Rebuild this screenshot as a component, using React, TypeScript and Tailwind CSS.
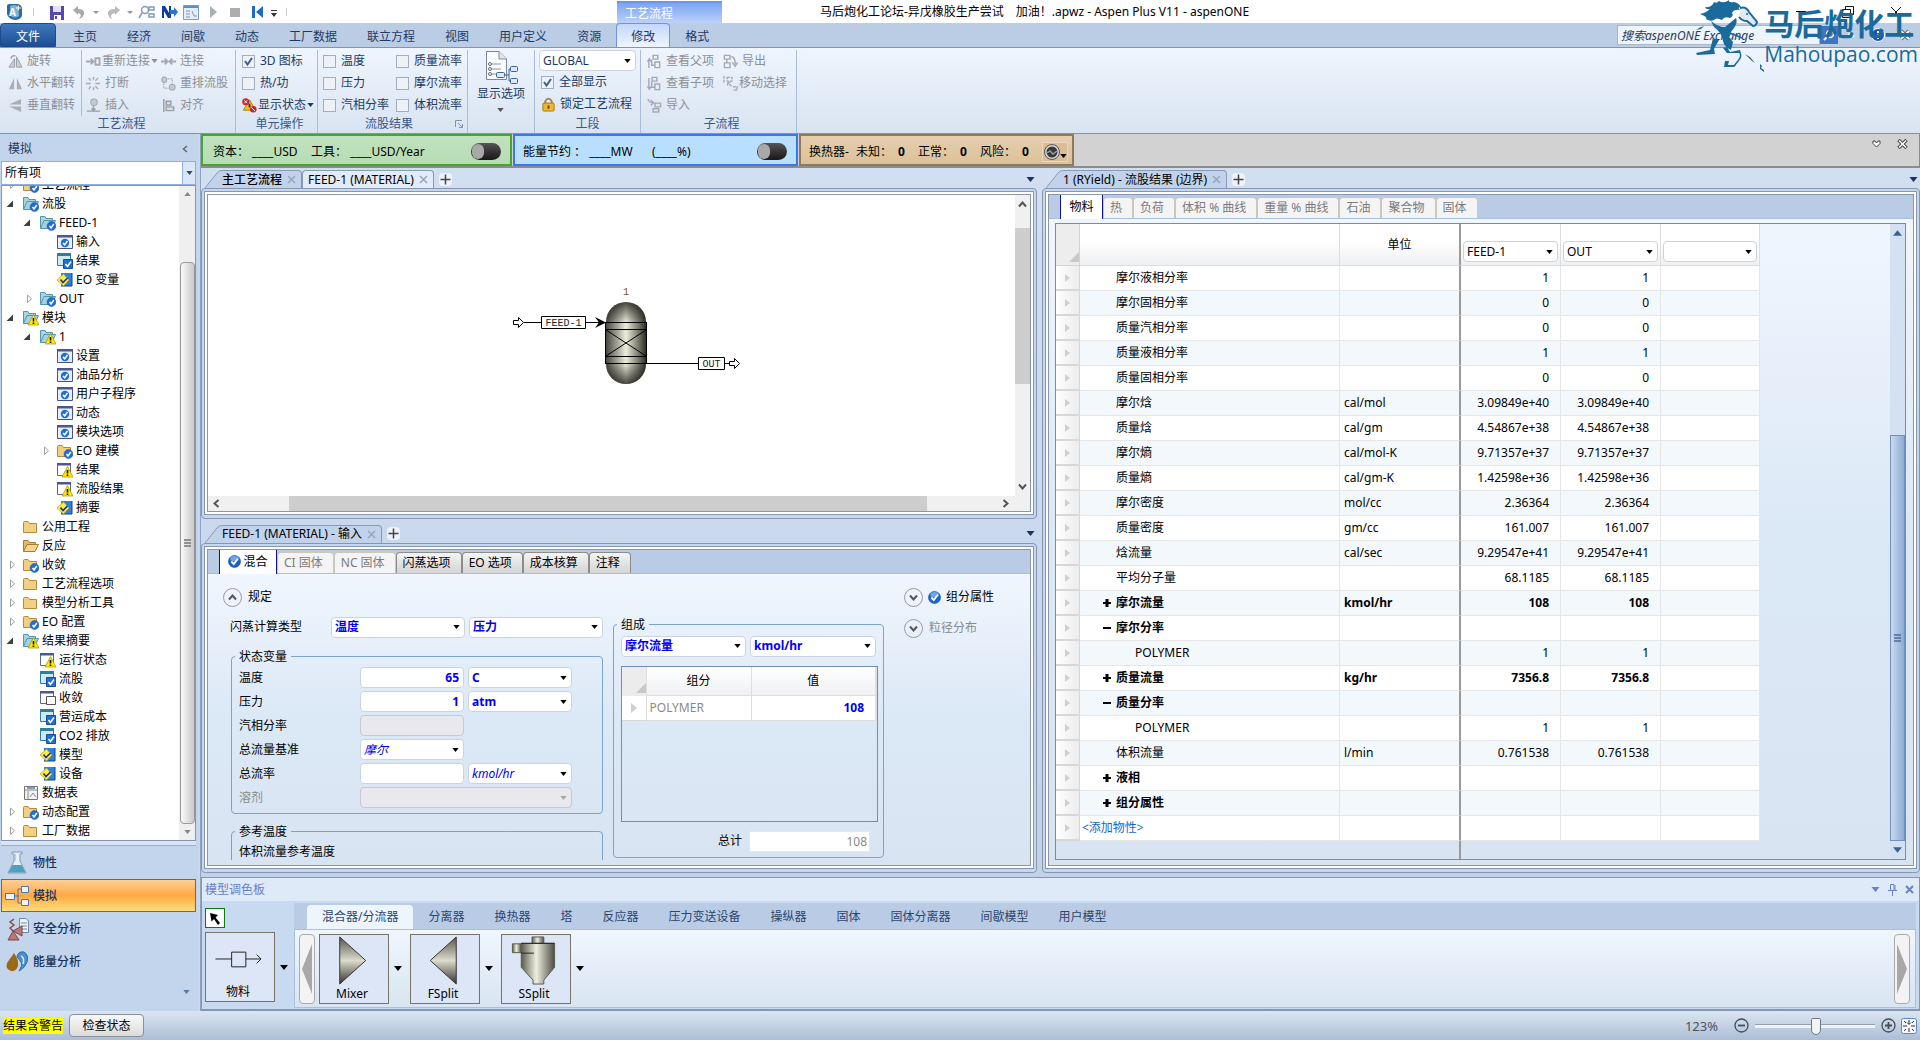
import type { ReactNode } from "react";

const SHELL_FONT =
    "font-['Noto_Sans','Noto_Sans_CJK_SC',sans-serif] text-xs leading-4";

/* ---------- small shared pieces ---------- */

function Caret({ className = "" }: { className?: string }) {
    return (
        <svg viewBox="0 0 8 5" className={`h-[4px] w-[7px] shrink-0 ${className}`} aria-hidden="true">
            <path d="M0 0H8L4 5Z" fill="currentColor" />
        </svg>
    );
}

interface ComboProps {
    label: string;
    value?: string;
    className?: string;
    disabled?: boolean;
}

function Combo({ label, value = "", className = "", disabled = false }: ComboProps) {
    return (
        <span
            className={`relative flex h-[21px] items-center rounded-sm border ${
                disabled ? "border-[#c9c9cd] bg-[#e8e8ee]" : "border-[#ccd3de] bg-white"
            } ${className}`}
        >
            <select
                aria-label={label}
                disabled={disabled}
                defaultValue={value}
                className="h-full w-full appearance-none bg-transparent pr-4 pl-[3px] outline-none"
            >
                <option value={value}>{value}</option>
            </select>
            <Caret
                className={`pointer-events-none absolute right-1 ${disabled ? "text-[#a8a8a8]" : "text-black"}`}
            />
        </span>
    );
}

function Tick({ label, checked = false }: { label: string; checked?: boolean }) {
    return (
        <label className="flex h-[22px] items-center gap-[5px] whitespace-nowrap">
            <span className="relative flex size-[13px] shrink-0">
                <input
                    type="checkbox"
                    defaultChecked={checked}
                    className="peer size-[13px] appearance-none border border-[#a3adbd] bg-[#eef1f5]"
                />
                <svg
                    viewBox="0 0 13 13"
                    className="pointer-events-none absolute inset-0 hidden peer-checked:block"
                    aria-hidden="true"
                >
                    <path d="M3 6L5.500 9.500L10 3" fill="none" stroke="#3c5f96" strokeWidth="2" />
                </svg>
            </span>
            {label}
        </label>
    );
}

function CheckBall() {
    return (
        <svg viewBox="0 0 14 14" className="size-[13px] shrink-0" aria-hidden="true">
            <circle cx="7" cy="7" r="6.500" fill="#1b62c4" stroke="#0d4aa0" strokeWidth="0.600" />
            <ellipse cx="7" cy="4" rx="4.600" ry="2.800" fill="#6ba5ea" />
            <path d="M3.600 7L6.200 9.800L10.600 4" fill="none" stroke="#fff" strokeWidth="2" />
        </svg>
    );
}

/* ---------- title bar ---------- */

function QuickAccess() {
    return (
        <div className="flex w-[617px] items-center text-[#a8a8a8]">
            <svg width="290" height="20" viewBox="0 0 290 20" aria-hidden="true">
                <path d="M7 4Q7 2 9 2H18Q22 3 22 7V14Q20 18 15 18Q8 17 7 12Z" fill="#2d6c9e" />
                <path d="M10 4Q14 2 18 4L19 14Q15 17 11 14Z" fill="#7fb2d3" />
                <text x="9" y="14" fontSize="10" fontWeight="700" fill="#fff">A</text>
                <path d="M16 6H21M18.500 3.500V8.500" stroke="#fff" />
                <path d="M33.500 6V14M286.500 6V14" stroke="#c5cbd6" />
                <path d="M50 4H64V18H50Z" fill="#5a48a8" />
                <path d="M53 4H61V10H53Z" fill="#e3e1f3" />
                <path d="M54 13H61V18H54Z" fill="#fff" />
                <path d="M55 14H57V17H55Z" fill="#5a48a8" />
                <path d="M73 8L78 4V7Q85 7 84 12Q83 16 79 17Q83 12 78 11V13Z" fill="#aaa" />
                <path d="M93 9H99L96 12ZM127 9H133L130 12Z" fill="#999" />
                <path d="M120 8L115 4V7Q107 7 108 12Q109 16 112 17Q109 12 115 11V13Z" fill="#bbb" />
                <g fill="none" stroke="#7f9cb8" strokeWidth="1.500">
                    <circle cx="145" cy="8" r="3.500" />
                    <path d="M142 11L139 16M148 8H151M149 5H154V8H149ZM149 12H154V15H149Z" />
                </g>
                <path d="M162 16V4H165L169 11V4H171V16H168L164 9V16Z" fill="#103c9c" />
                <path d="M170 8H174V5L178 10L174 15V12H170Z" fill="#2d74cf" />
                <path d="M183.500 3.500H198.500V17.500H183.500Z" fill="#e4edf8" stroke="#7a9cc8" />
                <path d="M184 4H198V6H184Z" fill="#5c8ad0" />
                <path d="M186 9H190M186 12H190M186 15H190M192 9L194 14H197" stroke="#7f95b5" fill="none" />
                <path d="M210 4L217 10L210 16Z" fill="#a9b0ba" />
                <path d="M230 6H240V15H230Z" fill="#adadad" />
                <path d="M252 4H255V16H252ZM263 4V16L256 10Z" fill="#1c6ad0" />
                <path d="M271 8H277V9H271ZM271 11H277L274 15Z" fill="#333" />
            </svg>
        </div>
    );
}

function TitleBar() {
    return (
        <header className="flex h-[23px] bg-white text-black">
            <QuickAccess />
            <div className="mt-px w-[105px] border-t-2 border-[#6a96ea] bg-gradient-to-b from-[#7ba4f2] to-[#bcd1fa] pl-2 leading-[22px] text-white">
                工艺流程
            </div>
            <h1 className="pl-[98px] leading-[23px] whitespace-pre">
                马后炮化工论坛-异戊橡胶生产尝试　加油！.apwz - Aspen Plus V11 - aspenONE
            </h1>
            <div className="ml-auto flex items-center gap-9 pr-[18px]">
                <button aria-label="最小化" className="h-px w-2.5 bg-black" />
                <button aria-label="还原">
                    <svg width="12" height="12" viewBox="0 0 12 12" aria-hidden="true">
                        <path d="M0.500 3.500H8.500V11.500H0.500ZM3.500 3V0.500H11.500V8.500H9" fill="none" stroke="#111" />
                    </svg>
                </button>
                <button aria-label="关闭">
                    <svg width="12" height="12" viewBox="0 0 12 12" aria-hidden="true">
                        <path d="M1 1L11 11M11 1L1 11" stroke="#111" />
                    </svg>
                </button>
            </div>
        </header>
    );
}

const ribbonTabs = ["主页", "经济", "间歇", "动态", "工厂数据", "联立方程", "视图", "用户定义", "资源"];

function RibbonTabs() {
    return (
        <nav className="flex h-[25px] items-end border-b border-[#6d97dd] bg-[#bbcde5] text-[#1e3a64]">
            <button className="h-6 w-14 rounded-t-sm border border-[#1d4b8d] bg-gradient-to-b from-[#3f78bd] to-[#1d4e95] pt-[3px] text-white">
                文件
            </button>
            <div className="flex pl-0.5">
                {ribbonTabs.map((tab) => (
                    <button key={tab} className="h-6 px-[15px] pt-[3px]">
                        {tab}
                    </button>
                ))}
            </div>
            <button className="h-6 w-[54px] rounded-t-sm border border-b-0 border-[#6d97dd] bg-gradient-to-b from-[#c3d6fb] to-[#f0f5fe] pt-[3px]">
                修改
            </button>
            <button className="h-6 px-[15px] pt-[3px]">格式</button>
            <div className="ml-auto flex h-6 items-center pr-[9px]">
                <input
                    aria-label="搜索aspenONE Exchange"
                    defaultValue="搜索aspenONE Exchange"
                    className="h-5 w-[203px] border border-[#adb6c4] bg-[#eef4fb] px-[3px] text-[#2a3c5c] italic outline-none"
                />
                <button aria-label="搜索" className="flex h-[18px] w-[18px] items-center justify-center bg-[#3f74c0]">
                    <svg width="12" height="12" viewBox="0 0 12 12" aria-hidden="true">
                        <path d="M5 7L1 11" stroke="#fff" strokeWidth="2" />
                        <circle cx="7" cy="5" r="3.500" fill="none" stroke="#fff" strokeWidth="1.500" />
                    </svg>
                </button>
                <svg width="9" height="6" viewBox="0 0 9 6" className="ml-2" aria-hidden="true">
                    <path d="M1 5L4.500 1L8 5" fill="none" stroke="#fff" strokeWidth="2" />
                </svg>
                <svg width="14" height="14" viewBox="0 0 14 14" className="ml-4" aria-hidden="true">
                    <circle cx="7" cy="7" r="6.500" fill="#1d50c0" stroke="#fff" />
                    <path d="M7 3V5M7 6V11" stroke="#fff" strokeWidth="2" />
                </svg>
                <svg width="12" height="12" viewBox="0 0 12 12" className="ml-[14px]" aria-hidden="true">
                    <path d="M2 2L10 10M10 2L2 10" stroke="#667" strokeWidth="4" />
                    <path d="M2 2L10 10M10 2L2 10" stroke="#fff" strokeWidth="2" />
                </svg>
            </div>
        </nav>
    );
}

/* ---------- ribbon ---------- */

const ribbonIcons: Record<string, ReactNode> = {
    rotate: (
        <>
            <path d="M1 14H7L7 5ZM9 14H15L9 3Z" fill="#c9ccd2" stroke="#9a9ea6" />
            <path d="M3 5Q4 1 8 2" fill="none" stroke="#9a9ea6" strokeWidth="1.500" />
        </>
    ),
    flipH: <path d="M1 14H6.500V2ZM9.500 14H15L9.500 2Z" fill="#a9adb4" />,
    flipV: <path d="M1 7L14 1V7ZM1 9H14V15Z" fill="#a9adb4" />,
    reconnect: (
        <path d="M0 8H7M5 5L8 8L5 11M10 4.500H14.500V11.500H10Z" fill="none" stroke="#a5a9b0" strokeWidth="2" />
    ),
    cut: (
        <path d="M0 8H5M10 8H15M5 5L3 2M8 4V1M10 5L13 2M5 11L3 14M8 12V15M10 11L13 14" fill="none" stroke="#a5a9b0" strokeWidth="1.500" />
    ),
    insert: (
        <>
            <rect x="5" y="1" width="7" height="7" rx="3" fill="#c6c9ce" stroke="#9a9ea6" />
            <path d="M1 14H15M8 8V13M6 11L8 14L10 11" fill="none" stroke="#9a9ea6" strokeWidth="1.500" />
        </>
    ),
    connect: <path d="M0 8H6M4 5L7 8L4 11M16 8H10M12 5L9 8L12 11" fill="none" stroke="#a5a9b0" strokeWidth="2" />,
    reroute: (
        <>
            <rect x="1" y="1" width="5" height="6" rx="2" fill="#c6c9ce" stroke="#9a9ea6" />
            <rect x="9" y="9" width="6" height="6" rx="2" fill="#c6c9ce" stroke="#9a9ea6" />
            <path d="M3 8V13H8M7 3H12V8" fill="none" stroke="#9a9ea6" strokeDasharray="2 1" />
        </>
    ),
    align: <path d="M3 1V15M5.500 3.500H10.500V7.500H5.500ZM5.500 9.500H13.500V13.500H5.500Z" fill="#dadde2" stroke="#9a9ea6" strokeWidth="1.500" />,
    status: (
        <>
            <path d="M8 2L14.500 13H1.500Z" fill="#f5c518" stroke="#a87c00" />
            <path d="M8 6V10" stroke="#333" strokeWidth="2" />
            <circle cx="4" cy="4" r="3.800" fill="#d8202a" />
            <path d="M2.500 2.500L5.500 5.500M5.500 2.500L2.500 5.500" stroke="#fff" />
            <circle cx="12" cy="12" r="3.500" fill="#d8202a" />
            <path d="M10 10L14 14" stroke="#fff" />
        </>
    ),
    lock: (
        <>
            <path d="M4.500 8V4.500Q8 -1 11.500 4.500V8" fill="none" stroke="#9a8757" strokeWidth="2" />
            <rect x="2" y="6.500" width="12" height="8.500" rx="1" fill="#f0b62c" stroke="#a87812" />
            <path d="M8 9V12.500" stroke="#6b4a05" strokeWidth="2" />
        </>
    ),
    parent: (
        <path d="M6.500 1.500H11.500V5.500H6.500ZM8.500 8.500H13.500V14.500H8.500ZM2 15V6M0.500 8L2.500 5L4.500 8M5 6V12H8" fill="none" stroke="#a5a9b0" strokeWidth="1.500" />
    ),
    child: (
        <path d="M5.500 1.500H10.500V5.500H5.500ZM8.500 8.500H13.500V14.500H8.500ZM2 2V14M0.500 11L2.500 14L4.500 11M5 6V12H8" fill="none" stroke="#a5a9b0" strokeWidth="1.500" />
    ),
    importIn: (
        <path d="M8.500 5.500H14.500V9.500H8.500ZM6.500 11.500H12.500V15H6.500ZM1 1Q2 5 6 5M4 2L7 5L4 8" fill="none" stroke="#a5a9b0" strokeWidth="1.500" />
    ),
    exportOut: (
        <path d="M1.500 1.500H7.500V5.500H1.500ZM1.500 9.500H7.500V14.500H1.500ZM4 6V9M9 3Q13 3 13 11M10 9L13 13L15.500 9" fill="none" stroke="#a5a9b0" strokeWidth="1.500" />
    ),
    move: (
        <path d="M1 0V7M4.500 1.500H9.500V5.500H4.500ZM9 11L5 7M5 10V7H8M10.500 11.500H15V15H10.500" fill="none" stroke="#a5a9b0" strokeWidth="1.500" strokeDasharray="3 1" />
    ),
};

interface RibbonButtonProps {
    icon: string;
    label: string;
    muted?: boolean;
    caret?: boolean;
    slim?: boolean;
}

function RibbonButton({ icon, label, muted = true, caret = false, slim = false }: RibbonButtonProps) {
    return (
        <button
            className={`flex h-[22px] items-center whitespace-nowrap ${slim ? "gap-px" : "gap-1"} ${
                muted ? "text-[#8d9095]" : "text-[#1e3a64]"
            }`}
        >
            <svg viewBox="0 0 16 16" className="size-[15px] shrink-0" aria-hidden="true">
                {ribbonIcons[icon]}
            </svg>
            {label}
            {caret && <Caret className="h-[3px] w-[5px]" />}
        </button>
    );
}

function RibbonGroup({
    title,
    className = "",
    launcher = false,
    children,
}: {
    title: string;
    className?: string;
    launcher?: boolean;
    children?: ReactNode;
}) {
    return (
        <section className={`flex flex-col border-r border-[#a9bdd8] ${className}`}>
            <div className="flex h-[66px]">{children}</div>
            <div className="flex items-center justify-center text-[#3b5688]">
                <h2 className={launcher ? "ml-auto" : ""}>{title}</h2>
                {launcher && (
                    <button aria-label={`${title}选项`} className="mr-1 ml-auto">
                        <svg width="8" height="8" viewBox="0 0 8 8" aria-hidden="true">
                            <path d="M0.500 7V0.500H7M3 3L7 7M7.500 4V7.500H4" fill="none" stroke="#7f93b3" />
                        </svg>
                    </button>
                )}
            </div>
        </section>
    );
}

function Ribbon() {
    return (
        <div className="flex h-[86px] border-b border-[#6d97dd] bg-gradient-to-b from-[#eff5fe] to-[#d8e4f1] pt-0.5 text-[#1e3a64]">
            <RibbonGroup title="工艺流程" className="w-[236px] pl-2">
                <div className="w-[74px] border-r border-[#a9bdd8]">
                    <RibbonButton icon="rotate" label="旋转" />
                    <RibbonButton icon="flipH" label="水平翻转" />
                    <RibbonButton icon="flipV" label="垂直翻转" />
                </div>
                <div className="w-[75px] pl-1">
                    <RibbonButton icon="reconnect" label="重新连接" caret slim />
                    <RibbonButton icon="cut" label="打断" />
                    <RibbonButton icon="insert" label="插入" />
                </div>
                <div className="pl-1">
                    <RibbonButton icon="connect" label="连接" />
                    <RibbonButton icon="reroute" label="重排流股" />
                    <RibbonButton icon="align" label="对齐" />
                </div>
            </RibbonGroup>
            <RibbonGroup title="单元操作" className="w-[82px] pl-1.5">
                <div>
                    <Tick label="3D 图标" checked />
                    <Tick label="热/功" />
                    <RibbonButton icon="status" label="显示状态" muted={false} caret slim />
                </div>
            </RibbonGroup>
            <RibbonGroup title="流股结果" className="w-[150px] pl-[5px]" launcher>
                <div className="w-[73px]">
                    <Tick label="温度" />
                    <Tick label="压力" />
                    <Tick label="汽相分率" />
                </div>
                <div>
                    <Tick label="质量流率" />
                    <Tick label="摩尔流率" />
                    <Tick label="体积流率" />
                </div>
            </RibbonGroup>
            <div className="flex w-[67px] justify-center border-r border-[#a9bdd8]">
                <button className="flex flex-col items-center">
                    <svg width="34" height="34" viewBox="0 0 34 34" aria-hidden="true">
                        <path d="M2.500 1.500H15L22.500 9V29.500H2.500Z" fill="#fbfcfe" stroke="#7c8899" />
                        <path d="M15 1.500V9H22.500" fill="#dfe5ee" stroke="#7c8899" />
                        <path d="M8 14H17M8 19H17M8 24H13" stroke="#8a94a4" />
                        <circle cx="6" cy="14" r="1.500" fill="none" stroke="#667" />
                        <circle cx="6" cy="19" r="1.500" fill="none" stroke="#667" />
                        <circle cx="6" cy="24" r="1.500" fill="none" stroke="#667" />
                        <path d="M20 25H25V19H27M25 25V31H27" fill="none" stroke="#3e6396" />
                        <rect x="12.500" y="22.500" width="8" height="5" rx="1" fill="#dbe8f8" stroke="#3e6396" />
                        <rect x="26.500" y="16.500" width="7" height="5" rx="1" fill="#dbe8f8" stroke="#3e6396" />
                        <rect x="26.500" y="28.500" width="7" height="5" rx="1" fill="#dbe8f8" stroke="#3e6396" />
                    </svg>
                    <span className="leading-5">显示选项</span>
                    <Caret className="mt-1 h-[3px] w-[5px] text-[#555]" />
                </button>
            </div>
            <RibbonGroup title="工段" className="w-[106px] px-1">
                <div className="w-full">
                    <Combo label="工段" value="GLOBAL" />
                    <div className="px-0.5">
                        <Tick label="全部显示" checked />
                        <RibbonButton icon="lock" label="锁定工艺流程" muted={false} />
                    </div>
                </div>
            </RibbonGroup>
            <RibbonGroup title="子流程" className="w-[156px] pl-1.5">
                <div className="w-[76px]">
                    <RibbonButton icon="parent" label="查看父项" />
                    <RibbonButton icon="child" label="查看子项" />
                    <RibbonButton icon="importIn" label="导入" />
                </div>
                <div>
                    <RibbonButton icon="exportOut" label="导出" />
                    <RibbonButton icon="move" label="移动选择" slim />
                </div>
            </RibbonGroup>
        </div>
    );
}

/* ---------- left navigation ---------- */

type NodeIcon = "folderOk" | "tealOk" | "tealWarn" | "folder" | "open" | "form" | "resultOk" | "eo" | "warn" | "blank" | "sheet";

interface TreeNode {
    level: 0 | 1 | 2;
    icon: NodeIcon;
    label: string;
    state?: "open" | "closed";
}

const tree: TreeNode[] = [
    { level: 0, icon: "folderOk", label: "工艺流程", state: "closed" },
    { level: 0, icon: "tealOk", label: "流股", state: "open" },
    { level: 1, icon: "tealOk", label: "FEED-1", state: "open" },
    { level: 2, icon: "form", label: "输入" },
    { level: 2, icon: "resultOk", label: "结果" },
    { level: 2, icon: "eo", label: "EO 变量" },
    { level: 1, icon: "tealOk", label: "OUT", state: "closed" },
    { level: 0, icon: "tealWarn", label: "模块", state: "open" },
    { level: 1, icon: "tealWarn", label: "1", state: "open" },
    { level: 2, icon: "form", label: "设置" },
    { level: 2, icon: "form", label: "油品分析" },
    { level: 2, icon: "form", label: "用户子程序" },
    { level: 2, icon: "form", label: "动态" },
    { level: 2, icon: "form", label: "模块选项" },
    { level: 2, icon: "folderOk", label: "EO 建模", state: "closed" },
    { level: 2, icon: "warn", label: "结果" },
    { level: 2, icon: "warn", label: "流股结果" },
    { level: 2, icon: "eo", label: "摘要" },
    { level: 0, icon: "folder", label: "公用工程" },
    { level: 0, icon: "open", label: "反应" },
    { level: 0, icon: "folderOk", label: "收敛", state: "closed" },
    { level: 0, icon: "folder", label: "工艺流程选项", state: "closed" },
    { level: 0, icon: "folder", label: "模型分析工具", state: "closed" },
    { level: 0, icon: "folderOk", label: "EO 配置", state: "closed" },
    { level: 0, icon: "tealWarn", label: "结果摘要", state: "open" },
    { level: 1, icon: "warn", label: "运行状态" },
    { level: 1, icon: "resultOk", label: "流股" },
    { level: 1, icon: "blank", label: "收敛" },
    { level: 1, icon: "resultOk", label: "营运成本" },
    { level: 1, icon: "resultOk", label: "CO2 排放" },
    { level: 1, icon: "eo", label: "模型" },
    { level: 1, icon: "eo", label: "设备" },
    { level: 0, icon: "sheet", label: "数据表" },
    { level: 0, icon: "folderOk", label: "动态配置", state: "closed" },
    { level: 0, icon: "folder", label: "工厂数据", state: "closed" },
];

const levelPadding = { 0: "pl-0.5", 1: "pl-[19px]", 2: "pl-9" };

const okBadge = (
    <>
        <circle cx="11.500" cy="11" r="4.400" fill="#1f6fd6" stroke="#0f4fa8" strokeWidth="0.600" />
        <path d="M9.500 11L11 13L13.800 9" fill="none" stroke="#fff" strokeWidth="1.500" />
    </>
);
const warnBadge = (
    <>
        <path d="M10.500 4.500L16 15H5Z" fill="#ffe800" stroke="#a89000" strokeWidth="0.700" />
        <path d="M10.500 8V11.500M10.500 12.500V14" stroke="#111" strokeWidth="1.600" />
    </>
);
const yellowFolder = (
    <path d="M0.500 3.500Q0.500 2.500 1.500 2.500H5L6.500 4.500H13.500V13.500H0.500Z" fill="#f2cf83" stroke="#b48a3c" />
);
const tealFolder = (
    <>
        <path d="M0.500 13.500V1.500H5L6 3.500H12.500V6" fill="#a9d4e2" stroke="#5496ac" />
        <path d="M0.500 13.500L4 5.500H15.500L12 13.500Z" fill="#a5d2df" stroke="#5496ac" />
    </>
);
const windowBox = (
    <>
        <path d="M0.500 1.500H13.500V13.500H0.500Z" fill="#fff" stroke="#5a6a98" />
        <path d="M0 1H14V3.500H0Z" fill="#4a5790" />
    </>
);

const treeIcons: Record<NodeIcon, ReactNode> = {
    folderOk: <>{yellowFolder}{okBadge}</>,
    tealOk: <>{tealFolder}{okBadge}</>,
    tealWarn: <>{tealFolder}{warnBadge}</>,
    folder: yellowFolder,
    open: (
        <>
            <path d="M0.500 13.500V2.500H5L6.500 4.500H12.500V7" fill="#e6bb60" stroke="#a87c30" />
            <path d="M0.500 13.500L4 6.500H15.500L12 13.500Z" fill="#f6d68c" stroke="#a87c30" />
        </>
    ),
    form: (
        <>
            <path d="M0.500 1.500H15.500V14.500H0.500Z" fill="#e9effa" stroke="#47538c" />
            <path d="M0 1H16V3.500H0Z" fill="#4a5790" />
            <circle cx="8" cy="9" r="4.200" fill="#1f6fd6" />
            <path d="M6 9L7.700 10.800L10.500 7" fill="none" stroke="#fff" strokeWidth="1.500" />
        </>
    ),
    resultOk: (
        <>
            <path d="M0.500 0.500H13.500V12.500H0.500Z" fill="#cfe9f0" stroke="#2e7f9a" />
            <path d="M0 0H14V3H0Z" fill="#2e7f9a" />
            <path d="M6.500 6.500H15.500V15.500H6.500Z" fill="#1f6fd6" stroke="#0f4fa8" />
            <path d="M8.500 11L10.500 13.500L14 8.500" fill="none" stroke="#fff" strokeWidth="1.600" />
        </>
    ),
    eo: (
        <>
            <path d="M4 1H15V14H4Z" fill="#2d7fe0" />
            <path d="M15 1V14H4" fill="none" stroke="#123f8c" />
            <path d="M0 8L6.500 2L12 8L6.500 14Z" fill="#ffee35" stroke="#c0a400" strokeWidth="0.700" />
            <path d="M3.500 7.500L6 10.500L10.500 6" fill="none" stroke="#1130b0" strokeWidth="1.600" />
        </>
    ),
    warn: <>{windowBox}{warnBadge}</>,
    blank: (
        <>
            {windowBox}
            <path d="M6.500 6.500H15.500V14.500H6.500Z" fill="#fff" stroke="#555" />
        </>
    ),
    sheet: (
        <>
            <path d="M1.500 1.500H14.500V14.500H1.500Z" fill="#f2f2f2" stroke="#777" />
            <path d="M2 5H14M5 6V14M7 12L10 8L13 12" fill="none" stroke="#888" />
            <path d="M4 3H12" stroke="#4a86b8" strokeWidth="1.500" />
        </>
    ),
};

function TreeArrow({ state }: { state?: "open" | "closed" }) {
    return (
        <svg viewBox="0 0 15 19" className="mr-1 h-[19px] w-[15px] shrink-0" aria-hidden="true">
            {state === "open" && <path d="M9 6.500V13H2.500Z" fill="#404040" />}
            {state === "closed" && <path d="M6.500 6V13.500L10.500 9.800Z" fill="#fff" stroke="#a0a0a0" />}
        </svg>
    );
}

function NavTree() {
    return (
        <div className="flex min-h-0 flex-1 border border-[#8296b4] bg-white">
            <ul className="flex min-w-0 flex-1 flex-col justify-end overflow-hidden text-black">
                {tree.map((node, i) => (
                    <li key={i} className={`flex h-[19px] shrink-0 items-center ${levelPadding[node.level]}`}>
                        <TreeArrow state={node.state} />
                        <svg viewBox="0 0 16 16" className="mr-[3px] size-4 shrink-0" aria-hidden="true">
                            {treeIcons[node.icon]}
                        </svg>
                        <span className="whitespace-nowrap">{node.label}</span>
                    </li>
                ))}
            </ul>
            <div className="flex w-4 flex-col items-center bg-[#efefef] text-[#888]">
                <Caret className="my-1.5 rotate-180" />
                <div className="mt-[60px] flex w-[15px] flex-1 items-center justify-center rounded-sm border border-[#999] bg-gradient-to-r from-[#fafafa] to-[#c9c9cd]">
                    <svg width="7" height="8" viewBox="0 0 7 8" aria-hidden="true">
                        <path d="M0 1H7M0 4H7M0 7H7" stroke="#777" strokeWidth="1.500" />
                    </svg>
                </div>
                <Caret className="my-1.5" />
            </div>
        </div>
    );
}

const workspaces = [
    {
        label: "物性",
        active: false,
        icon: (
            <>
                <path d="M7 1H17V3H15V10L21 22H3L9 10V3H7Z" fill="#e4eef6" stroke="#8298ac" />
                <path d="M7.500 14H16.500L20.500 21.500H3.500Z" fill="#4e9fc0" />
                <path d="M10 3V10" stroke="#9fb4c4" />
            </>
        ),
    },
    {
        label: "模拟",
        active: true,
        icon: (
            <>
                <path d="M9 12H14M17 5H13V19H17" fill="none" stroke="#5a6f96" />
                <path d="M0.500 9.500H9.500V15.500H0.500ZM16.500 2.500H23.500V8.500H16.500ZM16.500 15.500H23.500V21.500H16.500Z" fill="#eef4fd" stroke="#5673a6" />
            </>
        ),
    },
    {
        label: "安全分析",
        active: false,
        icon: (
            <>
                <path d="M14.500 1.500H21L23.500 4V15.500H14.500Z" fill="#eef3fa" stroke="#7088a8" />
                <path d="M16 6H22M16 9H22M16 12H22" stroke="#7088a8" />
                <path d="M8 14L3 23H14ZM8 14L17 9V19Z" fill="#b77a7a" stroke="#7c4545" />
                <path d="M8 14L5 11L9 8L5 5L9 2" fill="none" stroke="#8c4c4c" strokeWidth="1.500" />
            </>
        ),
    },
    {
        label: "能量分析",
        active: false,
        icon: (
            <>
                <path d="M9 3Q14 10 13 16Q11 22 6 21Q0 19 2 13Q4 10 9 3Z" fill="#9c6a16" />
                <path d="M12 7Q13 1 19 2Q24 5 22 12Q20 18 14 21Q18 15 16 12Q14 9 12 7Z" fill="#4d8fc8" stroke="#2c6ba6" />
                <path d="M16 6Q20 8 18 14" fill="none" stroke="#d5e8f8" strokeWidth="1.500" />
            </>
        ),
    },
];

function Sidebar() {
    return (
        <aside className="flex w-[198px] shrink-0 flex-col bg-[#c3d5ec] pr-0.5 pl-px">
            <div className="flex h-[27px] items-center justify-between pt-[3px] pr-2 pl-[7px] text-[#1e3a64]">
                <h2>模拟</h2>
                <svg width="6" height="8" viewBox="0 0 6 8" aria-hidden="true">
                    <path d="M5 1L1.500 4L5 7" fill="none" stroke="#666" strokeWidth="1.500" />
                </svg>
            </div>
            <span className="relative flex h-6 border border-[#8fb0dc] bg-white">
                <select aria-label="筛选" className="w-full appearance-none pl-[3px] text-black outline-none">
                    <option>所有项</option>
                </select>
                <span className="pointer-events-none absolute inset-y-0 right-0 flex w-[13px] items-center justify-center border-l border-[#8fb0dc] bg-[#dbe7f6] text-[#2b4a74]">
                    <Caret />
                </span>
            </span>
            <NavTree />
            <div className="h-[5px] border-b border-[#8fb0dc] bg-[#d6e4f5]" />
            <nav className="flex h-[165px] flex-col">
                {workspaces.map((item) => (
                    <button
                        key={item.label}
                        className={`flex h-[33px] items-center gap-1 border pl-[3px] font-medium text-[#16325c] ${
                            item.active
                                ? "border-[#4b6d9f] bg-gradient-to-b from-[#ffcf94] via-[#ffa93f] to-[#ffdc7c]"
                                : "border-transparent"
                        }`}
                    >
                        <svg viewBox="0 0 24 24" className="size-6 shrink-0" aria-hidden="true">
                            {item.icon}
                        </svg>
                        {item.label}
                    </button>
                ))}
                <Caret className="mt-3 mr-1.5 h-[3px] w-[5px] self-end text-[#5b7ba6]" />
            </nav>
        </aside>
    );
}

/* ---------- indicator strip ---------- */

function Toggle({ label }: { label: string }) {
    return (
        <button
            role="switch"
            aria-checked="false"
            aria-label={label}
            className="ml-auto flex h-[17px] w-[30px] items-center rounded-full bg-gradient-to-b from-[#555] to-[#1c1618] pl-px"
        >
            <span className="h-[15px] w-3 rounded-full bg-[#a9a9a9]" />
        </button>
    );
}

function Indicators() {
    return (
        <div className="flex h-[34px] border-r border-b-2 border-[#8c8c8c] bg-[#d2d2d2] text-black">
            <div className="flex w-[311px] items-center border-2 border-[#45a52e] bg-gradient-to-b from-[#c0e2bf] to-[#b7dcb4] pt-[3px] pr-[9px] pl-2.5 whitespace-pre">
                <span className="w-[98px]">资本： ____USD</span>
                <span>工具： ____USD/Year</span>
                <Toggle label="经济" />
            </div>
            <div className="ml-px flex w-[285px] items-center border-2 border-[#3d74f2] bg-[#b8dffe] pt-[3px] pr-[9px] pl-2 whitespace-pre">
                <span className="w-[129px]">能量节约 ： ____MW</span>
                <span>(____%)</span>
                <Toggle label="能量" />
            </div>
            <div className="ml-px flex w-[275px] items-center border-2 border-[#8d7b5c] bg-gradient-to-b from-[#e6cfae] to-[#dcc099] pt-[3px] pr-1 pl-2 whitespace-pre">
                <span className="w-[47px]">换热器-</span>
                <span className="w-[42px]">未知：</span>
                <b className="w-5">0</b>
                <span className="w-[42px]">正常：</span>
                <b className="w-5">0</b>
                <span className="w-[42px]">风险：</span>
                <b>0</b>
                <button
                    aria-label="换热器详情"
                    className="ml-auto flex h-5 w-[26px] items-center border border-[#ecd9bd] bg-[#d8bd96] pl-px"
                >
                    <svg width="16" height="16" viewBox="0 0 16 16" className="shrink-0" aria-hidden="true">
                        <circle cx="8" cy="8" r="7.500" fill="#d6d6d2" stroke="#555" />
                        <circle cx="8" cy="8" r="5.500" fill="#3a3a3a" />
                        <path d="M3 9L6 7L9 10L13 7" fill="none" stroke="#999" strokeWidth="1.500" />
                    </svg>
                    <Caret className="mt-2" />
                </button>
            </div>
            <div className="ml-auto flex gap-4 pt-1 pr-[11px]">
                <button aria-label="折叠" className="flex h-3 items-center">
                    <svg width="9" height="8" viewBox="0 0 9 8" aria-hidden="true">
                        <path d="M1 1H3L4.500 3L6 1H8V3.500L4.500 7L1 3.500Z" fill="#fff" stroke="#444" />
                    </svg>
                </button>
                <button aria-label="关闭" className="flex h-3 items-center">
                    <svg width="11" height="10" viewBox="0 0 11 10" aria-hidden="true">
                        <path d="M1.500 1L9.500 9M9.500 1L1.500 9" stroke="#444" strokeWidth="3.500" />
                        <path d="M2 1.500L9 8.500M9 1.500L2 8.500" stroke="#fff" strokeWidth="1.500" />
                    </svg>
                </button>
            </div>
        </div>
    );
}

/* ---------- document windows ---------- */

function DocTab({ label, active = false, bold = false }: { label: string; active?: boolean; bold?: boolean }) {
    return (
        <div className="flex h-[18px] items-stretch text-black">
            {active ? (
                <svg width="17" height="18" viewBox="0 0 17 18" aria-hidden="true">
                    <path d="M0 18L12 3Q14 0.500 17 0.500V18Z" fill="#c1d3ec" />
                    <path d="M0 18L12 3Q14 0.500 17 0.500" fill="none" stroke="#8a9ab4" />
                </svg>
            ) : (
                <span className="w-1.5 rounded-tl border-t border-l border-[#8a9ab4] bg-[#e1ecf8]" />
            )}
            <div
                className={`flex items-center gap-[5px] rounded-tr-sm border-t border-r border-[#8a9ab4] pr-[5px] ${
                    active ? "bg-[#c1d3ec]" : "bg-[#e1ecf8]"
                }`}
            >
                <button className={`whitespace-nowrap ${bold ? "font-medium" : ""}`}>{label}</button>
                <button aria-label={`关闭 ${label}`}>
                    <svg width="9" height="9" viewBox="0 0 9 9" aria-hidden="true">
                        <path d="M1 1L8 8M8 1L1 8" stroke="#9aa6b8" strokeWidth="1.500" />
                    </svg>
                </button>
            </div>
        </div>
    );
}

function DocWindow({ tabs, className, children }: { tabs: ReactNode; className: string; children: ReactNode }) {
    return (
        <section className={`flex min-h-0 min-w-0 flex-col ${className}`}>
            <div className="flex h-[18px] items-center pl-1">
                {tabs}
                <button
                    aria-label="新建标签"
                    className="ml-[5px] flex size-[13px] items-center justify-center rounded-sm bg-[#eef3fa]"
                >
                    <svg width="11" height="11" viewBox="0 0 11 11" aria-hidden="true">
                        <path d="M5.500 0.500V10.500M0.500 5.500H10.500" stroke="#444" strokeWidth="1.500" />
                    </svg>
                </button>
                <Caret className="mr-0.5 ml-auto h-[5px] w-[9px] text-[#17335f]" />
            </div>
            <div className="flex min-h-0 flex-1 rounded-sm border border-[#8796ae] bg-[#c4d8f2] px-0.5 pt-0.5 pb-[3px]">
                <div className="flex min-h-0 min-w-0 flex-1 border border-[#8796ae] bg-white p-0.5">
                    <div className="flex min-h-0 min-w-0 flex-1 flex-col border border-[#8796ae]">{children}</div>
                </div>
            </div>
        </section>
    );
}

function FlowDiagram() {
    return (
        <svg className="h-full w-full" aria-label="工艺流程图">
            <defs>
                <linearGradient id="steel">
                    <stop offset="0" stopColor="#45453f" />
                    <stop offset="0.500" stopColor="#eeeeda" />
                    <stop offset="0.900" stopColor="#55554d" />
                    <stop offset="1" stopColor="#2a2a26" />
                </linearGradient>
                <linearGradient id="shade" x2="0" y2="1">
                    <stop offset="0" stopColor="#000" stopOpacity="0.700" />
                    <stop offset="0.250" stopColor="#000" stopOpacity="0" />
                    <stop offset="0.750" stopColor="#000" stopOpacity="0" />
                    <stop offset="1" stopColor="#000" stopOpacity="0.700" />
                </linearGradient>
            </defs>
            <rect x="398" y="107" width="40" height="82" rx="20" fill="url(#steel)" />
            <rect x="398" y="107" width="40" height="82" rx="20" fill="url(#shade)" />
            <g fill="none" stroke="#000">
                <path d="M397.500 127.500H438.500M397.500 134.500H438.500M397.500 161.500H438.500M397.500 168.500H490M397.500 127V169M438.500 127V169" />
                <path d="M398 135L438 161M438 135L398 161" />
                <path d="M316 127.500H333M378 127.500H392M516 168.500H521" />
                <path d="M305.500 125.500H310.500V122.500L315.500 127.500L310.500 132.500V129.500H305.500Z" fill="#fff" />
                <path d="M521.500 166.500H526.500V163.500L531.500 168.500L526.500 173.500V170.500H521.500Z" fill="#fff" />
                <path d="M333.500 121.500H377.500V133.500H333.500ZM490.500 162.500H516.500V174.500H490.500Z" fill="#fff" />
            </g>
            <path d="M387 122L398 127.500L387 133L391 127.500Z" fill="#000" />
            <g fontSize="10" textAnchor="middle" className="font-['Liberation_Mono',monospace]">
                <text x="418" y="100" fill="#8a4a10">1</text>
                <text x="355.500" y="131" fill="#222">FEED-1</text>
                <text x="503.500" y="172" fill="#222">OUT</text>
            </g>
        </svg>
    );
}

function Chevron({ turn = "" }: { turn?: string }) {
    return (
        <svg width="9" height="7" viewBox="0 0 9 7" className={`shrink-0 ${turn}`} aria-hidden="true">
            <path d="M1 5.500L4.500 1.500L8 5.500" fill="none" stroke="#555" strokeWidth="2" />
        </svg>
    );
}

function FlowsheetWindow() {
    return (
        <DocWindow
            className="flex-[351]"
            tabs={
                <>
                    <DocTab label="主工艺流程" active bold />
                    <DocTab label="FEED-1 (MATERIAL)" />
                </>
            }
        >
            <div className="flex min-h-0 flex-1 bg-white">
                <div className="min-w-0 flex-1">
                    <FlowDiagram />
                </div>
                <div className="flex w-[15px] flex-col items-center bg-[#f0f0f0] pt-1.5 pb-1.5">
                    <Chevron />
                    <div className="mt-5 h-[54%] w-full bg-[#cdcdcd]" />
                    <Chevron turn="mt-auto rotate-180" />
                </div>
            </div>
            <div className="flex h-[15px] items-center bg-[#f0f0f0] pr-5 pl-1">
                <Chevron turn="-rotate-90" />
                <div className="ml-[68px] h-full w-[80%] bg-[#cdcdcd]" />
                <Chevron turn="ml-auto rotate-90" />
            </div>
        </DocWindow>
    );
}

/* ---------- stream input form ---------- */

function PageTabs({ tabs, children }: { tabs: { label: string; muted: boolean }[]; children: ReactNode }) {
    return (
        <div className="flex h-6 items-end border-b border-[#a9bfdc] bg-[#bacce5] pl-[11px]">
            {children}
            {tabs.map((tab) => (
                <button
                    key={tab.label}
                    className={`h-[21px] rounded-t-sm border border-b-0 pr-2.5 pl-1.5 whitespace-nowrap ${
                        tab.muted
                            ? "border-[#c9c8ba] bg-[#f4f4f4] text-[#7b7b7b]"
                            : "border-[#8c8c8c] bg-gradient-to-b from-[#f4f4f4] to-[#d4d4d4] text-black"
                    }`}
                >
                    {tab.label}
                </button>
            ))}
        </div>
    );
}

function RoundToggle({ label, open = false }: { label: string; open?: boolean }) {
    return (
        <button
            aria-label={label}
            className="flex size-[19px] items-center justify-center rounded-full border border-[#9a9a9a]"
        >
            <Chevron turn={open ? "" : "rotate-180"} />
        </button>
    );
}

const inputTabs = [
    { label: "CI 固体", muted: true },
    { label: "NC 固体", muted: true },
    { label: "闪蒸选项", muted: false },
    { label: "EO 选项", muted: false },
    { label: "成本核算", muted: false },
    { label: "注释", muted: false },
];

const fieldBox = "h-[21px] w-[104px] rounded-sm border px-1 text-right outline-none";

function StateVariables() {
    return (
        <fieldset className="mt-[11px] ml-2 rounded border border-[#7ea3c9] pb-[3px] pl-[3px]">
            <legend className="px-1">状态变量</legend>
            <div className="pt-px pl-1">
                <div className="flex h-6 items-center">
                    <label htmlFor="temp" className="w-[121px]">温度</label>
                    <input id="temp" defaultValue="65" className={`${fieldBox} border-[#ccd3de] bg-white font-bold text-[#0000f0]`} />
                    <Combo label="温度单位" value="C" className="ml-1 w-[104px] font-bold text-[#0000f0]" />
                </div>
                <div className="flex h-6 items-center">
                    <label htmlFor="pres" className="w-[121px]">压力</label>
                    <input id="pres" defaultValue="1" className={`${fieldBox} border-[#ccd3de] bg-white font-bold text-[#0000f0]`} />
                    <Combo label="压力单位" value="atm" className="ml-1 w-[104px] font-bold text-[#0000f0]" />
                </div>
                <div className="flex h-6 items-center">
                    <label htmlFor="vfrac" className="w-[121px]">汽相分率</label>
                    <input id="vfrac" disabled className={`${fieldBox} border-[#c9c9cd] bg-[#e8e8ee]`} />
                </div>
                <div className="flex h-6 items-center">
                    <span className="w-[121px]">总流量基准</span>
                    <Combo label="总流量基准" value="摩尔" className="w-[104px] text-[#0000f0] italic" />
                </div>
                <div className="flex h-6 items-center">
                    <label htmlFor="flow" className="w-[121px]">总流率</label>
                    <input id="flow" className={`${fieldBox} border-[#ccd3de] bg-white`} />
                    <Combo label="总流率单位" value="kmol/hr" className="ml-1 w-[104px] text-[#0000f0] italic" />
                </div>
                <div className="flex h-6 items-center text-[#8a8a8a]">
                    <span className="w-[121px]">溶剂</span>
                    <Combo label="溶剂" disabled className="w-[212px]" />
                </div>
            </div>
        </fieldset>
    );
}

function Composition() {
    return (
        <fieldset className="mt-[29px] ml-2.5 h-[241px] w-[270px] shrink-0 rounded border border-[#7ea3c9] px-[3px]">
            <legend className="px-1">组成</legend>
            <div className="flex gap-1 px-1 pt-[3px]">
                <Combo label="组成基准" value="摩尔流量" className="w-[125px] font-bold text-[#0000f0]" />
                <Combo label="组成单位" value="kmol/hr" className="w-[126px] font-bold text-[#0000f0]" />
            </div>
            <div className="mt-[9px] ml-1 h-[156px] w-[257px] border border-[#6a8fb8]">
                <table className="w-full table-fixed border-collapse">
                    <thead>
                        <tr className="h-[29px] bg-gradient-to-b from-white to-[#eff0f2]">
                            <th className="w-6 bg-[#ececec] align-bottom">
                                <svg width="10" height="10" viewBox="0 0 10 10" className="mb-[3px] ml-auto" aria-hidden="true">
                                    <path d="M10 0V10H0Z" fill="#c8c8c8" />
                                </svg>
                            </th>
                            <th className="w-[105px] border-x border-b border-[#dedede] font-normal">组分</th>
                            <th className="border-r-2 border-b border-[#dedede] font-normal">值</th>
                        </tr>
                    </thead>
                    <tbody>
                        <tr className="h-[25px] bg-white">
                            <td className="border-b border-[#d8d8d8]">
                                <svg width="6" height="10" viewBox="0 0 6 10" className="mx-auto" aria-hidden="true">
                                    <path d="M0 0V10L6 5Z" fill="#cfcfcf" />
                                </svg>
                            </td>
                            <td className="border border-[#dedede] pl-[3px] text-[#8a8a8a]">POLYMER</td>
                            <td className="border-r-2 border-b border-[#dedede] pr-[11px] text-right font-bold text-[#0000f0]">108</td>
                        </tr>
                    </tbody>
                </table>
            </div>
            <div className="mt-[9px] flex items-center justify-end gap-[7px] pr-2.5">
                <label htmlFor="total">总计</label>
                <input
                    id="total"
                    readOnly
                    value="108"
                    className="h-[21px] w-[121px] border border-[#e4e8ee] bg-white px-0.5 text-right text-[#8a8a8a] outline-none"
                />
            </div>
        </fieldset>
    );
}

function InputWindow() {
    return (
        <DocWindow className="flex-[351]" tabs={<DocTab label="FEED-1 (MATERIAL) - 输入" active />}>
            <PageTabs tabs={inputTabs}>
                <button className="flex h-6 w-[58px] items-center justify-center gap-0.5 self-stretch border-x border-[#10109a] bg-white text-black">
                    <CheckBall />
                    混合
                </button>
            </PageTabs>
            <div className="flex min-h-0 flex-1 items-start bg-gradient-to-b from-[#f0f6fe] via-[#dbe8f6] to-[#d9e4f2] pt-[14px] pb-[5px] pl-[15px] text-black">
                <div className="h-full w-[380px] shrink-0 overflow-hidden">
                    <div className="flex items-center gap-1.5">
                        <RoundToggle label="收起规定" open />
                        规定
                    </div>
                    <div className="mt-2.5 flex items-center gap-1 pl-[7px]">
                        <span className="w-[97px]">闪蒸计算类型</span>
                        <Combo label="闪蒸计算类型一" value="温度" className="w-[134px] font-bold text-[#0000f0]" />
                        <Combo label="闪蒸计算类型二" value="压力" className="w-[134px] font-bold text-[#0000f0]" />
                    </div>
                    <StateVariables />
                    <fieldset className="mt-2.5 ml-2 rounded border border-[#7ea3c9] pb-6 pl-[3px]">
                        <legend className="px-1">参考温度</legend>
                        <p className="pt-1 pl-1">体积流量参考温度</p>
                    </fieldset>
                </div>
                <Composition />
                <div className="ml-5 flex flex-col gap-3 whitespace-nowrap">
                    <div className="flex items-center gap-[5px]">
                        <RoundToggle label="展开组分属性" />
                        <CheckBall />
                        组分属性
                    </div>
                    <div className="flex items-center gap-1.5 text-[#8a8a8a]">
                        <RoundToggle label="展开粒径分布" />
                        粒径分布
                    </div>
                </div>
            </div>
        </DocWindow>
    );
}

/* ---------- stream results ---------- */

const resultTabs = ["热", "负荷", "体积 % 曲线", "重量 % 曲线", "石油", "聚合物", "固体"].map((label) => ({
    label,
    muted: true,
}));

interface ResultRow {
    name: string;
    unit?: string;
    feed?: string;
    out?: string;
    mark?: "plus" | "minus";
    child?: boolean;
    link?: boolean;
}

const results: ResultRow[] = [
    { name: "摩尔液相分率", feed: "1", out: "1" },
    { name: "摩尔固相分率", feed: "0", out: "0" },
    { name: "质量汽相分率", feed: "0", out: "0" },
    { name: "质量液相分率", feed: "1", out: "1" },
    { name: "质量固相分率", feed: "0", out: "0" },
    { name: "摩尔焓", unit: "cal/mol", feed: "3.09849e+40", out: "3.09849e+40" },
    { name: "质量焓", unit: "cal/gm", feed: "4.54867e+38", out: "4.54867e+38" },
    { name: "摩尔熵", unit: "cal/mol-K", feed: "9.71357e+37", out: "9.71357e+37" },
    { name: "质量熵", unit: "cal/gm-K", feed: "1.42598e+36", out: "1.42598e+36" },
    { name: "摩尔密度", unit: "mol/cc", feed: "2.36364", out: "2.36364" },
    { name: "质量密度", unit: "gm/cc", feed: "161.007", out: "161.007" },
    { name: "焓流量", unit: "cal/sec", feed: "9.29547e+41", out: "9.29547e+41" },
    { name: "平均分子量", feed: "68.1185", out: "68.1185" },
    { name: "摩尔流量", unit: "kmol/hr", feed: "108", out: "108", mark: "plus" },
    { name: "摩尔分率", mark: "minus" },
    { name: "POLYMER", feed: "1", out: "1", child: true },
    { name: "质量流量", unit: "kg/hr", feed: "7356.8", out: "7356.8", mark: "plus" },
    { name: "质量分率", mark: "minus" },
    { name: "POLYMER", feed: "1", out: "1", child: true },
    { name: "体积流量", unit: "l/min", feed: "0.761538", out: "0.761538" },
    { name: "液相", mark: "plus" },
    { name: "组分属性", mark: "plus" },
    { name: "<添加物性>", link: true },
];

function ResultName({ row }: { row: ResultRow }) {
    if (row.link) {
        return (
            <a href="#add" className="pl-0.5 text-[#1368c4]">
                {row.name}
            </a>
        );
    }
    return (
        <span className={`flex items-center ${row.child ? "pl-[55px]" : "pl-[23px]"}`}>
            {!row.child && (
                <svg width="8" height="8" viewBox="0 0 8 8" className="mr-[5px]" aria-hidden="true">
                    {row.mark && <path d="M0 3H8V5H0Z" fill="#000" />}
                    {row.mark === "plus" && <path d="M2.500 0H5.500V8H2.500Z" fill="#000" />}
                </svg>
            )}
            {row.name}
        </span>
    );
}

function ResultsTable() {
    return (
        <table className="w-[704px] table-fixed border-separate border-spacing-0 text-black">
            <colgroup>
                <col className="w-6" />
                <col className="w-[260px]" />
                <col className="w-[121px]" />
                <col className="w-[100px]" />
                <col className="w-[100px]" />
                <col className="w-[99px]" />
            </colgroup>
            <thead>
                <tr className="h-[42px] bg-gradient-to-b from-white from-40% to-[#eeeff1]">
                    <th className="border-r border-b border-[#d4d4d4] bg-[#ededed] align-bottom">
                        <svg width="10" height="10" viewBox="0 0 10 10" className="mb-[3px] ml-auto" aria-hidden="true">
                            <path d="M10 0V10H0Z" fill="#c8c8c8" />
                        </svg>
                    </th>
                    <th className="border-r border-b border-[#dedede]" />
                    <th className="border-r-2 border-b border-r-[#9a9a9a] border-b-[#dedede] font-normal">单位</th>
                    {["FEED-1", "OUT", ""].map((name, i) => (
                        <th key={i} className="border-r border-b border-[#dedede] px-0.5 pb-[3px] align-bottom font-normal">
                            <Combo label={`流股 ${i + 1}`} value={name} />
                        </th>
                    ))}
                </tr>
            </thead>
            <tbody>
                {results.map((row, i) => (
                    <tr
                        key={i}
                        className={`h-[25px] ${i % 2 ? "bg-[#f3f8fd]" : "bg-white"} ${row.mark ? "font-bold" : ""}`}
                    >
                        <td className="border-r border-b-2 border-[#d8d8d8] bg-gradient-to-r from-white to-[#ececec]">
                            <svg width="5" height="8" viewBox="0 0 5 8" className="mx-auto" aria-hidden="true">
                                <path d="M0 0V8L5 4Z" fill="#cfcfcf" />
                            </svg>
                        </td>
                        <td className="border-r border-b border-[#e6e6e6]">
                            <ResultName row={row} />
                        </td>
                        <td className="border-r-2 border-b border-r-[#9a9a9a] border-b-[#e6e6e6] pl-1">{row.unit}</td>
                        <td className="border-r border-b border-[#e6e6e6] pr-[11px] text-right">{row.feed}</td>
                        <td className="border-r border-b border-[#e6e6e6] pr-[11px] text-right">{row.out}</td>
                        <td className="border-r border-b border-[#e6e6e6]" />
                    </tr>
                ))}
                <tr className="h-[19px]">
                    <td colSpan={3} className="border-r-2 border-[#9a9a9a]" />
                    <td colSpan={3} />
                </tr>
            </tbody>
        </table>
    );
}

function ResultsWindow() {
    return (
        <DocWindow className="flex-[878]" tabs={<DocTab label="1 (RYield) - 流股结果 (边界)" active />}>
            <PageTabs tabs={resultTabs}>
                <button className="h-6 w-[43px] self-stretch border-x border-[#10109a] bg-white text-black">物料</button>
            </PageTabs>
            <div className="flex min-h-0 flex-1 bg-gradient-to-b from-[#f0f6fe] via-[#dbe8f6] to-[#d9e4f2] pt-1 pr-[7px] pb-[5px] pl-1.5">
                <div className="flex min-h-0 min-w-0 flex-1 justify-between overflow-hidden border border-[#6a8fb8]">
                    <ResultsTable />
                    <div className="flex w-[15px] flex-col items-center bg-[#d3e1f2] text-[#3f6190]">
                        <Caret className="mt-1.5 h-[6px] w-[9px] rotate-180" />
                        <div className="mt-[199px] flex w-full flex-1 items-center justify-center border border-[#6f91bb] bg-gradient-to-r from-[#c8daf0] to-[#8eabd2]">
                            <svg width="7" height="8" viewBox="0 0 7 8" aria-hidden="true">
                                <path d="M0 1H7M0 4H7M0 7H7" stroke="#4b6b98" strokeWidth="1.500" />
                            </svg>
                        </div>
                        <Caret className="my-1.5 h-[6px] w-[9px]" />
                    </div>
                </div>
            </div>
        </DocWindow>
    );
}

/* ---------- model palette ---------- */

const paletteTabs = ["分离器", "换热器", "塔", "反应器", "压力变送设备", "操纵器", "固体", "固体分离器", "间歇模型", "用户模型"];

const models = [
    {
        name: "Mixer",
        art: <path d="M15.500 2V50L42 26Z" fill="url(#cone)" stroke="#333" />,
    },
    {
        name: "FSplit",
        art: <path d="M41.500 2V50L15 26Z" fill="url(#cone)" stroke="#333" />,
    },
    {
        name: "SSplit",
        art: (
            <g fill="url(#drum)" stroke="#5a5a50">
                <path d="M26 2H38V9H26Z" />
                <path d="M6 9H15V18H6Z" />
                <path d="M15 8.500H49V33L38 46V50H27V46L15 33Z" />
                <path d="M15 8.500H49M15 18.500H28" stroke="#222" />
            </g>
        ),
    },
];

function PaletteItem({ name, children }: { name: string; children: ReactNode }) {
    return (
        <div className="flex items-center">
            <button className="flex h-[70px] w-[70px] flex-col items-center justify-end border border-[#77726a] bg-[#dde6f7] pr-1 pb-px text-black">
                <svg width="56" height="52" viewBox="0 0 56 52" aria-hidden="true">
                    {children}
                </svg>
                {name}
            </button>
            <Caret className="ml-1 h-[5px] w-[10px] text-black" />
        </div>
    );
}

function Palette() {
    return (
        <section className="flex h-[134px] flex-col border border-b-2 border-[#8796ae] bg-[#c8daf0]">
            <div className="flex h-[23px] items-center bg-[#deeaf7] pr-[5px] pl-[3px] text-[#6a80c8]">
                <h2 className="mr-auto">模型调色板</h2>
                <Caret className="h-[5px] w-[9px]" />
                <svg width="9" height="12" viewBox="0 0 9 12" className="ml-2" aria-hidden="true">
                    <path d="M2.500 6V0.500H6V6M7 1V6M0 6.500H9M4.500 7V12" fill="none" stroke="currentColor" />
                </svg>
                <button aria-label="关闭调色板" className="ml-2">
                    <svg width="9" height="9" viewBox="0 0 9 9" aria-hidden="true">
                        <path d="M1 1L8 8M8 1L1 8" stroke="currentColor" strokeWidth="2" />
                    </svg>
                </button>
            </div>
            <div className="flex min-h-0 flex-1 pt-0.5 pr-[3px]">
                <div className="flex w-[92px] flex-col gap-1 pt-[5px] pl-[3px]">
                    <button
                        aria-label="选择"
                        className="flex size-5 items-center justify-center border border-[#0a7a0a] bg-white"
                    >
                        <svg width="12" height="13" viewBox="0 0 12 13" aria-hidden="true">
                            <path d="M1 1L9 3L6.500 5.500L11 11L9 13L5 7L2.500 9.500Z" fill="#000" />
                        </svg>
                    </button>
                    <PaletteItem name="物料">
                        <path d="M5 26.500H21.500M36 26.500H51M47 22L51.500 26.500L47 31M21.500 19.500H36V34.500H21.500Z" fill="none" stroke="#222" />
                    </PaletteItem>
                </div>
                <div className="flex min-w-0 flex-1 flex-col">
                    <div className="flex h-[26px] items-end bg-[#bacce5] pl-[13px] text-[#2a466f]">
                        <button className="h-6 rounded-t-sm bg-[#eff5fd] px-[15px]">混合器/分流器</button>
                        {paletteTabs.map((tab) => (
                            <button key={tab} className="h-6 px-[15px]">
                                {tab}
                            </button>
                        ))}
                    </div>
                    <div className="flex h-[79px] items-center border border-[#a9bfdc] bg-gradient-to-b from-[#f0f6fe] to-[#d8e4f1] pr-[5px] pl-1">
                        <svg width="0" height="0" aria-hidden="true">
                            <defs>
                                <linearGradient id="cone" x2="0" y2="1">
                                    <stop offset="0" stopColor="#55554d" />
                                    <stop offset="0.500" stopColor="#dcdccb" />
                                    <stop offset="1" stopColor="#33332e" />
                                </linearGradient>
                                <linearGradient id="drum">
                                    <stop offset="0" stopColor="#5b5b52" />
                                    <stop offset="0.450" stopColor="#efefdf" />
                                    <stop offset="1" stopColor="#4c4c44" />
                                </linearGradient>
                            </defs>
                        </svg>
                        <button aria-label="向左" className="flex h-[70px] w-4 items-center justify-center rounded-sm border border-[#aaa] bg-[#f3f3f3]">
                            <svg width="10" height="50" viewBox="0 0 10 50" aria-hidden="true">
                                <path d="M10 0V50L0 25Z" fill="#a8a8a8" />
                            </svg>
                        </button>
                        <div className="flex gap-[7px] pl-1">
                            {models.map((model) => (
                                <PaletteItem key={model.name} name={model.name}>
                                    {model.art}
                                </PaletteItem>
                            ))}
                        </div>
                        <button aria-label="向右" className="ml-auto flex h-[70px] w-4 items-center justify-center rounded-sm border border-[#aaa] bg-[#f3f3f3]">
                            <svg width="10" height="50" viewBox="0 0 10 50" aria-hidden="true">
                                <path d="M0 0V50L10 25Z" fill="#a8a8a8" />
                            </svg>
                        </button>
                    </div>
                </div>
            </div>
        </section>
    );
}

/* ---------- status bar ---------- */

function StatusBar() {
    return (
        <footer className="flex h-[29px] items-center bg-gradient-to-b from-[#dbe6f3] to-[#abbed6] pr-[3px] pl-[3px] text-black">
            <span className="bg-[#ffff00]">结果含警告</span>
            <button className="ml-1.5 h-[23px] w-[75px] rounded-sm border border-[#8a8f98] bg-gradient-to-b from-[#f8f8f8] to-[#dcdcdc]">
                检查状态
            </button>
            <span className="ml-auto text-[13px] text-[#4c5460]">123%</span>
            <svg width="15" height="15" viewBox="0 0 15 15" className="ml-4" aria-hidden="true">
                <circle cx="7.500" cy="7.500" r="6.500" fill="none" stroke="#444c58" strokeWidth="1.300" />
                <path d="M4 7.500H11" stroke="#444c58" strokeWidth="1.800" />
            </svg>
            <input
                type="range"
                aria-label="缩放"
                defaultValue="51"
                className="mx-1.5 h-[17px] w-[120px] appearance-none bg-transparent [&::-webkit-slider-runnable-track]:h-1 [&::-webkit-slider-runnable-track]:border-t [&::-webkit-slider-runnable-track]:border-[#96a1b0] [&::-webkit-slider-runnable-track]:bg-[#f1f4f7] [&::-webkit-slider-thumb]:mt-[-7px] [&::-webkit-slider-thumb]:h-[17px] [&::-webkit-slider-thumb]:w-[10px] [&::-webkit-slider-thumb]:appearance-none [&::-webkit-slider-thumb]:rounded-t-xs [&::-webkit-slider-thumb]:rounded-b-md [&::-webkit-slider-thumb]:border [&::-webkit-slider-thumb]:border-[#6d7684] [&::-webkit-slider-thumb]:bg-[#f1f3f5]"
            />
            <svg width="15" height="15" viewBox="0 0 15 15" aria-hidden="true">
                <circle cx="7.500" cy="7.500" r="6.500" fill="none" stroke="#444c58" strokeWidth="1.300" />
                <path d="M4 7.500H11M7.500 4V11" stroke="#444c58" strokeWidth="1.800" />
            </svg>
            <button aria-label="适合窗口" className="ml-[5px]">
                <svg width="16" height="16" viewBox="0 0 16 16" aria-hidden="true">
                    <rect x="0.500" y="0.500" width="15" height="15" rx="2" fill="#f4f8fd" stroke="#5d86c0" />
                    <path d="M8 2V6M6 4.500L8 6.500L10 4.500M8 14V10M2 8H6M10 8H14M3 3L5 5M13 3L11 5M3 13L5 11M13 13L11 11" fill="none" stroke="#333" />
                </svg>
            </button>
        </footer>
    );
}

function ForumMark() {
    return (
        <div className="pointer-events-none absolute top-0 right-0.5 flex text-[#1a6a9b]">
            <svg width="68" height="74" viewBox="0 0 68 74" aria-hidden="true">
                <g fill="currentColor">
                    <path d="M4 14Q10 13 14 9Q10 10 9 7Q16 8 18 2Q21 4 23 1Q28 4 33 0Q32 3 38 2Q43 3 45 7Q41 7 44 10Q38 9 36 13Q38 16 34 18Q28 16 26 20Q20 17 18 20Q14 22 10 19Q12 17 4 14Z" />
                    <path d="M15 21Q22 27 29 27L40 18Q42 22 38 28Q34 32 33 37L37 42L35 50Q28 47 27 41Q26 33 18 27Z" />
                    <path d="M17 38L23 40L18 49L19 54L1 55L0 53L14 50Z" />
                    <path d="M27 48L31 47L34 52L44 50L45 53L31 53ZM49 54L54 57L59 63L56 61Z" />
                    <path d="M29 61L33 61L32 65L40 65L38 67L28 67Z" />
                    <path d="M64 64L66 66L65 68L68 70V72L64 69Z" />
                    <path d="M0 30Q4 27 8 26L5 29Z" />
                </g>
                <path d="M44 8Q50 6 53 12L61 22Q60 26 57 26L51 21Q46 21 43 17" fill="#dfeaf5" stroke="currentColor" strokeWidth="2" />
                <path d="M44 53Q46 57 42 61L38 66M46 38L34 33" fill="none" stroke="currentColor" strokeWidth="1.500" />
                <circle cx="51" cy="14" r="1" fill="currentColor" />
            </svg>
            <div className="flex flex-col pt-1">
                <span className="font-['Noto_Sans_CJK_SC',sans-serif] text-[30px] leading-9 font-bold">马后炮化工</span>
                <span className="font-['Open_Sans','Noto_Sans',sans-serif] text-[21px] leading-7 font-medium">Mahoupao.com</span>
            </div>
        </div>
    );
}

export default function App() {
    return (
        <div className={`relative flex h-screen flex-col overflow-hidden bg-[#c9d8ec] ${SHELL_FONT}`}>
            <TitleBar />
            <RibbonTabs />
            <Ribbon />
            <div className="flex min-h-0 flex-1">
                <Sidebar />
                <main className="ml-0.5 flex min-w-0 flex-1 flex-col border-l border-[#8fa3c0]">
                    <Indicators />
                    <div className="flex min-h-0 flex-1 gap-[5px] bg-gradient-to-b from-[#d2dff0] to-[#c1d2e9] pt-0.5 pb-1">
                        <div className="flex min-h-0 min-w-0 flex-[836] flex-col gap-1.5">
                            <FlowsheetWindow />
                            <InputWindow />
                        </div>
                        <ResultsWindow />
                    </div>
                    <Palette />
                </main>
            </div>
            <StatusBar />
            <ForumMark />
        </div>
    );
}
